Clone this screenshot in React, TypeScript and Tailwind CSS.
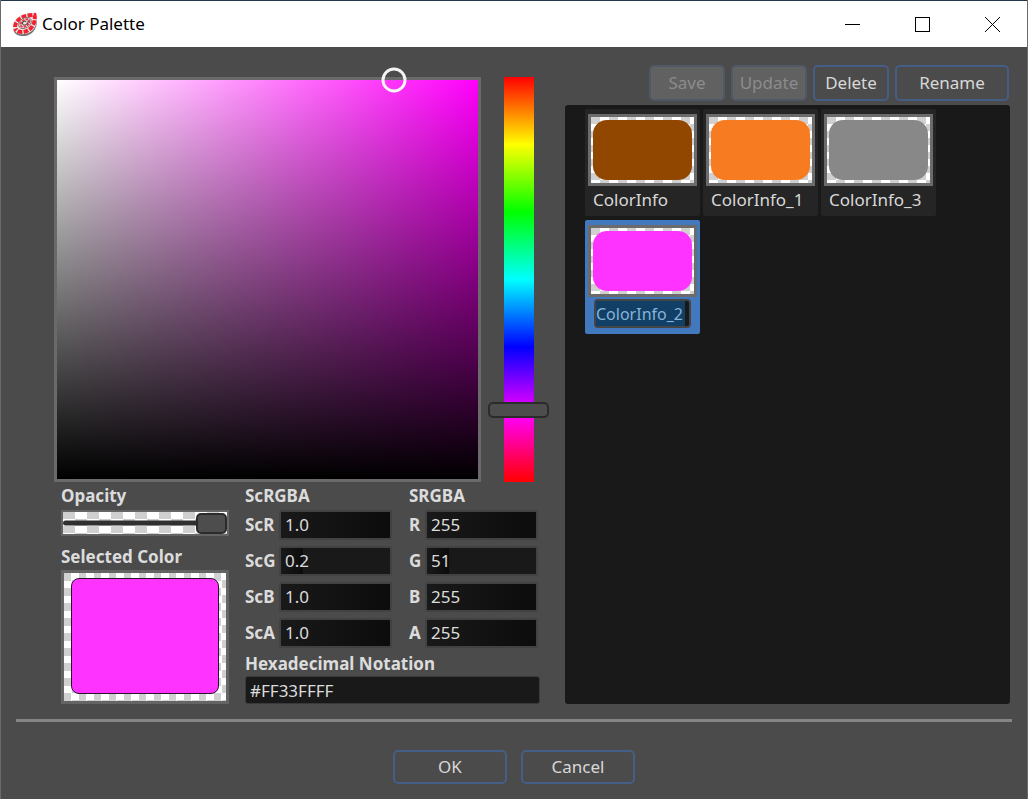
import { useState } from 'react';
import type { ReactNode } from 'react';
import clsx from 'clsx';

type ColorInfo = { name: string; color: string };
type Channel = { label: string; value: string; ratio: number };

const savedColors: ColorInfo[] = [
  { name: 'ColorInfo', color: '#914700' },
  { name: 'ColorInfo_1', color: '#f77b21' },
  { name: 'ColorInfo_3', color: '#888888' },
  { name: 'ColorInfo_2', color: '#ff33ff' },
];

const scChannels: Channel[] = [
  { label: 'ScR', value: '1.0', ratio: 1 },
  { label: 'ScG', value: '0.2', ratio: 0.2 },
  { label: 'ScB', value: '1.0', ratio: 1 },
  { label: 'ScA', value: '1.0', ratio: 1 },
];

const sChannels: Channel[] = [
  { label: 'R', value: '255', ratio: 1 },
  { label: 'G', value: '51', ratio: 0.2 },
  { label: 'B', value: '255', ratio: 1 },
  { label: 'A', value: '255', ratio: 1 },
];

const checker = 'bg-[repeating-conic-gradient(#ffffff_0_25%,#d0d0d0_0_50%)]';

function AppIcon() {
  return (
    <svg viewBox="0 0 26 26" className="size-[26px]" aria-hidden="true">
      <path d="M1 16C1 23 6 25.500 13 25C20 24 25 18 25 10L24 4Z" fill="#6f6f6f" />
      <path d="M1 17C0 8 10 1 24 1.500C26 7 25 14 21 19C15 25 3 25 1 17Z" fill="#f3e9e9" />
      <path
        d="M3 16C3 9 12 3.500 22.500 4C23.500 9 22 14 18.500 17.500C13 22.500 5 22 3.500 17.500"
        fill="none"
        stroke="#ee2430"
        strokeWidth="4"
        strokeDasharray="4.800 1.300"
      />
      <g transform="rotate(-35 13 12)">
        <ellipse cx="13" cy="12" rx="7" ry="4.800" fill="#f3e2e2" stroke="#777" strokeWidth="0.900" />
        <ellipse cx="13" cy="12" rx="5" ry="3" fill="none" stroke="#e23a42" strokeWidth="2" strokeDasharray="2.600 0.900" />
        <path d="M17 11.500C16 15 10 14 10.500 11.500S15 10 14.500 12" fill="none" stroke="#5a4a4a" strokeWidth="1" />
      </g>
    </svg>
  );
}

function TitleBar() {
  const caption = 'flex w-[70px] items-center justify-center hover:bg-neutral-200';
  return (
    <header className="flex h-[47px] border-t border-[#24384c] bg-white pl-[11px] text-black">
      <div className="flex flex-1 items-center gap-1">
        <AppIcon />
        <h1 className="text-[17px]">Color Palette</h1>
      </div>
      <button type="button" aria-label="Minimize" className={caption}>
        <svg viewBox="0 0 15 15" className="size-[15px]" shapeRendering="crispEdges">
          <path d="M0 7.500H15" stroke="#000" />
        </svg>
      </button>
      <button type="button" aria-label="Maximize" className={caption}>
        <svg viewBox="0 0 15 15" className="size-[15px]" shapeRendering="crispEdges">
          <rect x="0.500" y="0.500" width="14" height="14" fill="none" stroke="#000" />
        </svg>
      </button>
      <button type="button" aria-label="Close" className={caption}>
        <svg viewBox="0 0 15 15" className="size-[15px]">
          <path d="M0 0L15 15M15 0L0 15" stroke="#000" />
        </svg>
      </button>
    </header>
  );
}

function DialogButton({ children, wide, disabled }: { children: ReactNode; wide?: boolean; disabled?: boolean }) {
  return (
    <button
      type="button"
      disabled={disabled}
      className={clsx(
        'rounded-[5px] text-center',
        wide ? 'w-[114px]' : 'w-[76px]',
        disabled
          ? 'border-2 border-[#4f5866] bg-[#616161] text-[#8c8c8c]'
          : 'border-2 border-[#445e86] text-[#d8d8d8] hover:bg-[#565656]',
      )}
    >
      {children}
    </button>
  );
}

function ChannelField({ channel, group }: { channel: Channel; group: string }) {
  const id = `${group}-${channel.label}`;
  return (
    <div className="flex h-[30px] items-center">
      <label htmlFor={id} className={clsx('font-bold', group === 'sc' ? 'w-[34px]' : 'w-4')}>
        {channel.label}
      </label>
      <div className="relative h-full w-[113px] overflow-hidden rounded-[3px] border-2 border-[#424242] bg-[#191919]">
        <div
          className="absolute inset-y-0 left-0 bg-gradient-to-r from-[#191919] to-[#0c0c0c]"
          style={{ width: `${channel.ratio * 100}%` }}
        />
        <input id={id} defaultValue={channel.value} className="relative block h-full w-full bg-transparent px-1 pb-0.5 outline-none" />
      </div>
    </div>
  );
}

function ChannelGroup({ title, group, channels }: { title: string; group: string; channels: Channel[] }) {
  return (
    <fieldset>
      <legend className="flex h-7 items-center font-bold">{title}</legend>
      <div className="space-y-1.5">
        {channels.map((channel) => (
          <ChannelField key={channel.label} channel={channel} group={group} />
        ))}
      </div>
    </fieldset>
  );
}

function ColorPicker() {
  const [hue, setHue] = useState(301);
  const [opacity, setOpacity] = useState(100);

  return (
    <section className="w-[495px] shrink-0 pt-[30px]">
      <div className="flex justify-between">
        <div className="h-[405px] w-[427px] border-3 border-[#6b696b]">
          <div
            className="relative h-full w-full"
            style={{ background: `linear-gradient(to top, #000, transparent), linear-gradient(to right, #fff, hsl(${hue} 100% 50%))` }}
          >
            <span className="absolute top-0 left-[80%] size-[25px] -translate-x-1/2 -translate-y-1/2 rounded-full border-3 border-[#f4f4f4]" />
          </div>
        </div>
        <input
          type="range"
          aria-label="Hue"
          min={0}
          max={360}
          value={hue}
          onChange={(event) => setHue(Number(event.target.value))}
          className="h-[405px] w-[61px] appearance-none bg-[linear-gradient(to_bottom,#f00,#ff0,#0f0,#0ff,#00f,#f0f,#f00)] bg-[length:30px_100%] bg-center bg-no-repeat [writing-mode:vertical-lr] [&::-webkit-slider-thumb]:h-4 [&::-webkit-slider-thumb]:w-[61px] [&::-webkit-slider-thumb]:appearance-none [&::-webkit-slider-thumb]:rounded-[5px] [&::-webkit-slider-thumb]:border-2 [&::-webkit-slider-thumb]:border-[#2b2b2b] [&::-webkit-slider-thumb]:bg-[#4d4d4d]"
        />
      </div>

      <div className="flex gap-4 pl-[7px]">
        <div className="w-[168px]">
          <label htmlFor="opacity" className="flex h-7 items-center font-bold">
            Opacity
          </label>
          <div className={clsx('relative h-[26px] border-2 border-[#646464] bg-[length:24px_14px]', checker)}>
            <div className="absolute inset-x-0 top-1/2 h-[5px] -translate-y-1/2 rounded-full bg-[#303030]" />
            <input
              id="opacity"
              type="range"
              value={opacity}
              onChange={(event) => setOpacity(Number(event.target.value))}
              className="relative block h-full w-full appearance-none bg-transparent [&::-webkit-slider-thumb]:h-[21px] [&::-webkit-slider-thumb]:w-[31px] [&::-webkit-slider-thumb]:appearance-none [&::-webkit-slider-thumb]:rounded-[5px] [&::-webkit-slider-thumb]:border-2 [&::-webkit-slider-thumb]:border-[#2b2b2b] [&::-webkit-slider-thumb]:bg-[#4d4d4d]"
            />
          </div>
          <h2 className="mt-2 flex h-[26px] items-center font-bold">Selected Color</h2>
          <div className={clsx('h-[134px] border-3 border-[#646464] bg-[length:15px_15px] px-[7px] pt-[5px] pb-[7px]', checker)}>
            <div className="h-full rounded-lg border border-[#2a142a] bg-[#ff33ff]" />
          </div>
        </div>

        <div className="flex-1">
          <div className="flex gap-[17px]">
            <ChannelGroup title="ScRGBA" group="sc" channels={scChannels} />
            <ChannelGroup title="SRGBA" group="s" channels={sChannels} />
          </div>
          <label htmlFor="hex" className="flex h-7 items-center pt-[3px] font-bold">
            Hexadecimal Notation
          </label>
          <input
            id="hex"
            defaultValue="#FF33FFFF"
            className="block h-7 w-[295px] rounded-[3px] border border-[#3a3a3a] bg-[#191919] px-1 outline-none"
          />
        </div>
      </div>
    </section>
  );
}

function SavedColor({ item, selected, onSelect }: { item: ColorInfo; selected: boolean; onSelect: () => void }) {
  return (
    <li
      onClick={onSelect}
      className={clsx('w-[115px] rounded-[2px] px-[3px] pt-[5px]', selected ? 'bg-[#4178be] pb-[6px]' : 'bg-[#252525] pb-[2px]')}
    >
      <div className={clsx('h-[72px] border-3 border-[#6b6b6b] bg-[length:18px_14px] px-[2px] py-[3px]', checker)}>
        <div className="h-full rounded-[14px]" style={{ backgroundColor: item.color }} />
      </div>
      {selected ? (
        <div className="mx-[6px] mt-[2px] flex h-[29px] rounded-[4px] border-2 border-[#454545] bg-[#191919] pr-1">
          <input
            aria-label="Color name"
            defaultValue={item.name}
            className="h-full w-full min-w-0 bg-[#113f66] text-base text-[#86b4d8] outline-none"
          />
        </div>
      ) : (
        <p className="pl-[5px] leading-7 text-[#d8d8d8]">{item.name}</p>
      )}
    </li>
  );
}

function SavedColors() {
  const [selected, setSelected] = useState('ColorInfo_2');

  return (
    <section className="flex min-w-0 flex-1 flex-col pt-[18px]">
      <div className="flex h-9 justify-end gap-1.5 pr-px">
        <DialogButton disabled>Save</DialogButton>
        <DialogButton disabled>Update</DialogButton>
        <DialogButton>Delete</DialogButton>
        <DialogButton wide>Rename</DialogButton>
      </div>
      <ul className="mt-1 flex flex-1 flex-wrap content-start items-start gap-x-[3px] gap-y-1 rounded-[3px] bg-[#191919] pt-1 pl-5">
        {savedColors.map((item) => (
          <SavedColor key={item.name} item={item} selected={item.name === selected} onSelect={() => setSelected(item.name)} />
        ))}
      </ul>
    </section>
  );
}

export default function App() {
  return (
    <div className="flex min-h-screen flex-col border-x border-[#6a6a6a] bg-[#4b4b4b] font-['Segoe_UI','Noto_Sans',sans-serif] text-[17px] text-[#dcdcdc]">
      <TitleBar />
      <main className="flex gap-4 pr-[17px] pl-[53px]">
        <ColorPicker />
        <SavedColors />
      </main>
      <hr className="mx-[15px] mt-[15px] border-t-3 border-[#858585]" />
      <footer className="mt-7 flex h-[34px] justify-center gap-[14px]">
        <DialogButton wide>OK</DialogButton>
        <DialogButton wide>Cancel</DialogButton>
      </footer>
    </div>
  );
}
